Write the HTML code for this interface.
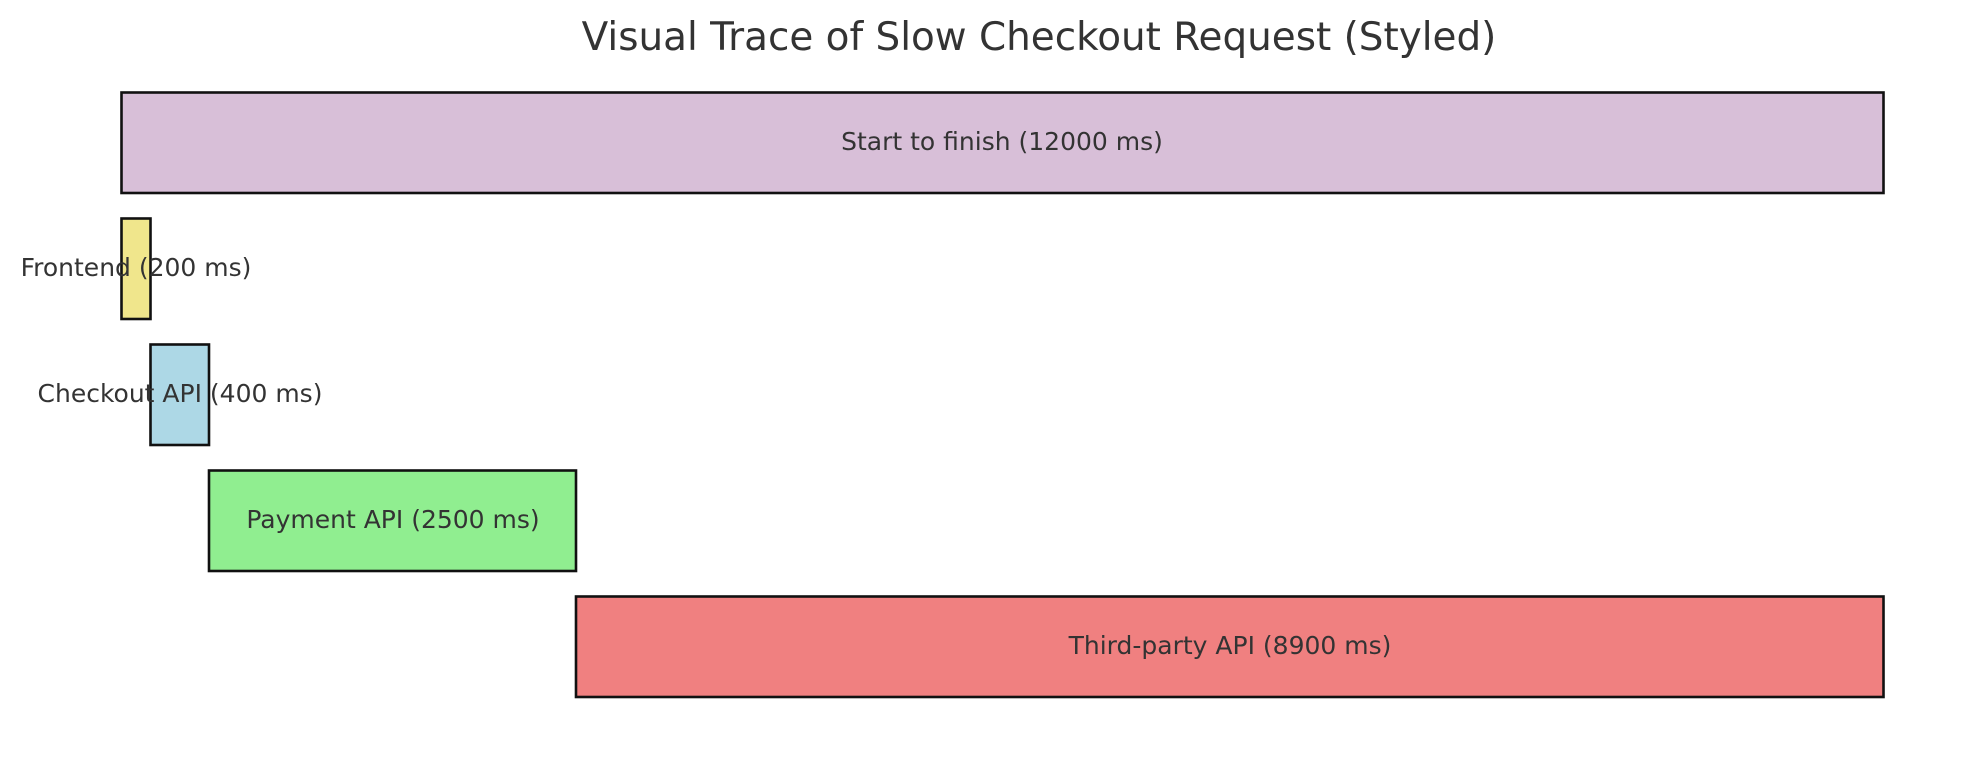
<!DOCTYPE html>
<html><head><meta charset="utf-8"><style>
html,body{margin:0;padding:0;background:#fff;width:1977px;height:780px;overflow:hidden}
text{font-family:"DejaVu Sans","Liberation Sans",sans-serif;fill:#333}
</style></head><body>
<svg width="1977" height="780" viewBox="0 0 1977 780" xmlns="http://www.w3.org/2000/svg">
<text x="1039" y="50" font-size="38.9" text-anchor="middle">Visual Trace of Slow Checkout Request (Styled)</text>
<g stroke="#111" stroke-width="2.6">
<rect x="121.5" y="92.5" width="1762" height="100.5" fill="#d8bfd8"/>
<rect x="121.5" y="218.5" width="29" height="100.5" fill="#f0e68c"/>
<rect x="150.5" y="344.5" width="58.5" height="100.5" fill="#add8e6"/>
<rect x="209" y="470.5" width="367" height="100.5" fill="#90ee90"/>
<rect x="576" y="596.5" width="1307.5" height="100.5" fill="#f08080"/>
</g>
<g font-size="25" text-anchor="middle">
<text x="1002" y="150">Start to finish (12000 ms)</text>
<text x="136" y="276">Frontend (200 ms)</text>
<text x="180" y="402">Checkout API (400 ms)</text>
<text x="393" y="528">Payment API (2500 ms)</text>
<text x="1230" y="654">Third-party API (8900 ms)</text>
</g>
</svg>
</body></html>
